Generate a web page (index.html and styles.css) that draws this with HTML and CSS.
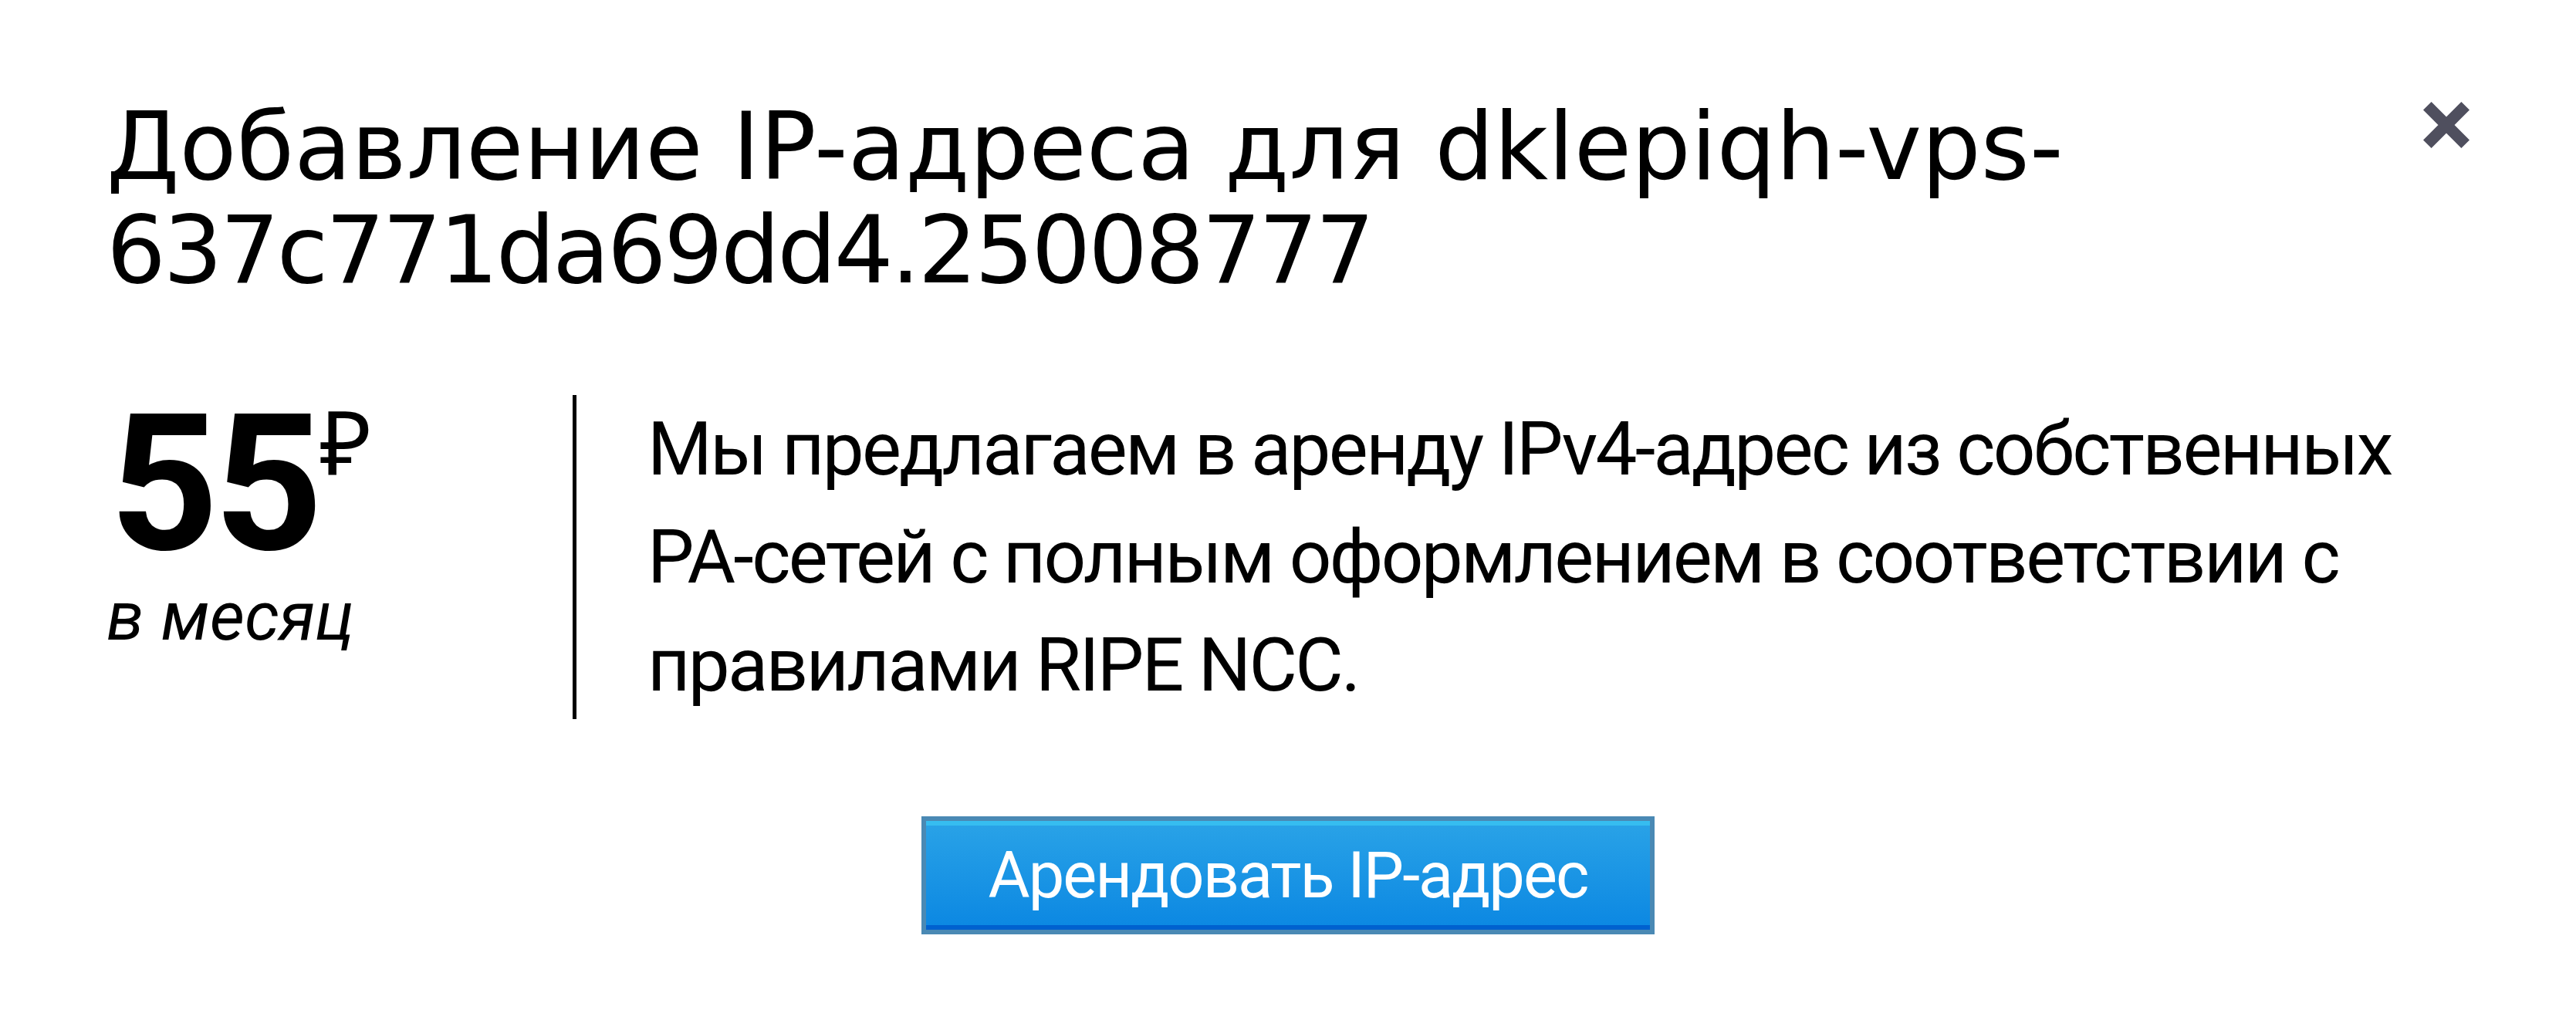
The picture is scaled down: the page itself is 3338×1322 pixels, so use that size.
FILE: index.html
```html
<!DOCTYPE html>
<html lang="ru">

<head>
    <meta charset="UTF-8">
    <meta name="viewport" content="width=device-width, initial-scale=1.0">
    <title>Добавление IP-адреса</title>
    <link rel="stylesheet" href="styles.css">
</head>

<body>
    <div class="modal">
        <button class="modal-close" type="button" aria-label="Закрыть">
            <svg viewBox="0 0 60 60" width="60" height="60">
                <path d="M5.3 5.3 L54.7 54.7 M54.7 5.3 L5.3 54.7" />
            </svg>
        </button>

        <h1 class="modal-title">Добавление IP-адреса для dklepiqh-vps-<span class="host-id">637c771da69dd4.25008777</span></h1>

        <div class="offer">
            <div class="offer-price">
                <div class="price-line">
                    <span class="price-amount">55</span>
                    <span class="price-currency">₽</span>
                </div>
                <div class="price-period">в месяц</div>
            </div>
            <p class="offer-text">Мы предлагаем в аренду IPv4-адрес из собственных PA-сетей с полным оформлением в соответствии с правилами RIPE NCC.</p>
        </div>

        <div class="modal-actions">
            <button class="btn-rent" type="submit">Арендовать IP-адрес</button>
        </div>
    </div>
</body>

</html>
```

FILE: styles.css
```css
body {
    margin: 0;
    background-color: #fff;
    color: #000;
    font-family: Roboto, "Noto Sans", sans-serif;
}

.modal {
    position: relative;
    padding: 124px 138px 0;
}

.modal-close {
    position: absolute;
    top: 132px;
    left: 3140px;
    width: 60px;
    height: 60px;
    padding: 0;
    border: none;
    background: none;
    cursor: pointer;
}

.modal-close svg {
    display: block;
}

.modal-close path {
    stroke: #4f4f5e;
    stroke-width: 15;
    fill: none;
}

.modal-title {
    margin: 0 250px 0 0;
    font-family: "DejaVu Sans", Verdana, sans-serif;
    font-size: 121px;
    font-weight: normal;
    line-height: 134px;
}

/* id part of the hostname is set a bit tighter */
.host-id {
    letter-spacing: -3.4px;
}

.offer {
    display: flex;
    margin-top: 120px;
}

.offer-price {
    width: 604px;
    flex-shrink: 0;
}

.price-line {
    display: flex;
    align-items: flex-start;
}

.price-amount {
    font-size: 246px;
    font-weight: 700;
    line-height: 232px;
    letter-spacing: -6px;
    margin-left: 4px;
}

.price-currency {
    font-family: "Noto Sans", sans-serif;
    font-size: 116px;
    line-height: 119px;
    margin-left: 2px;
}

.price-period {
    font-size: 88px;
    font-style: italic;
    line-height: 110px;
}

.offer-text {
    margin: 0;
    padding-left: 92px;
    border-left: 5px solid #000;
    font-size: 96px;
    line-height: 140px;
    letter-spacing: -2.7px;
}

.modal-actions {
    display: flex;
    justify-content: center;
    margin-top: 126px;
}

.btn-rent {
    width: 950px;
    height: 153px;
    padding: 0;
    border: 6px solid #4a89b4;
    background: linear-gradient(#2aa3e7, #0b87e2);
    box-shadow: inset 0 6px 0 #36bdf0, inset 0 -6px 0 #0061cf;
    color: #fff;
    font-family: Roboto, "Noto Sans", sans-serif;
    font-size: 83px;
    letter-spacing: -2px;
    cursor: pointer;
}
```
